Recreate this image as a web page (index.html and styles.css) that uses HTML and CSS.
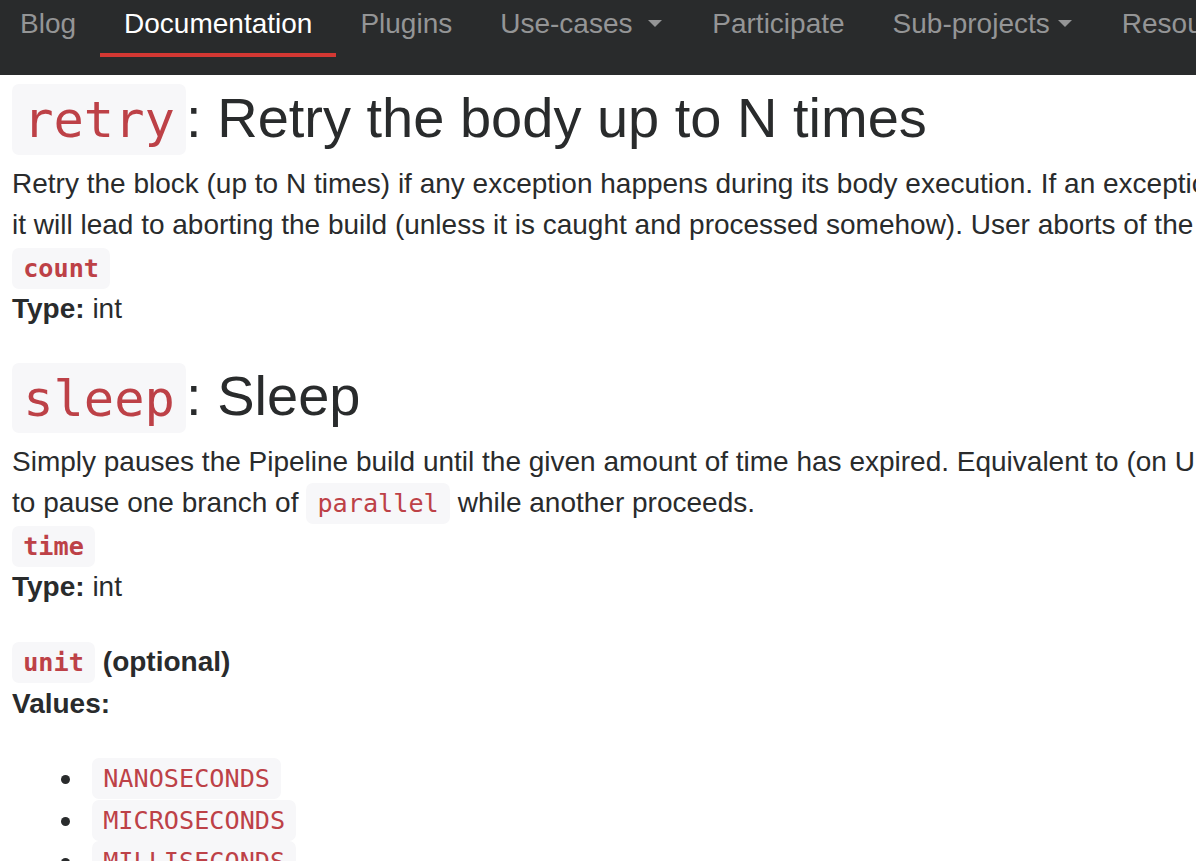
FILE: index.html
```html
<!DOCTYPE html>
<html lang="en">
<head>
<meta charset="utf-8">
<title>Pipeline Basic Steps</title>
<link rel="stylesheet" href="styles.css">
</head>
<body>
<nav class="navbar">
  <ul class="nav">
    <li><a class="nav-link" href="#">Blog</a></li>
    <li><a class="nav-link active" href="#">Documentation</a></li>
    <li><a class="nav-link" href="#">Plugins</a></li>
    <li><a class="nav-link" href="#">Use-cases <span class="caret"></span></a></li>
    <li><a class="nav-link" href="#">Participate</a></li>
    <li><a class="nav-link" href="#">Sub-projects<span class="caret"></span></a></li>
    <li><a class="nav-link" href="#">Resources<span class="caret"></span></a></li>
    <li><a class="nav-link" href="#">About<span class="caret"></span></a></li>
  </ul>
</nav>
<main class="content">
  <section class="step step-first">
    <h3 class="step-title"><code class="code">retry</code>: Retry the body up to N times</h3>
    <p class="desc">Retry the block (up to N times) if any exception happens during its body execution. If an exception happens on the final attempt then<br>it will lead to aborting the build (unless it is caught and processed somehow). User aborts of the build are not caught.</p>
    <div class="param"><code class="code pname">count</code></div>
    <div class="ptype"><b>Type:</b> int</div>
  </section>
  <section class="step">
    <h3 class="step-title"><code class="code">sleep</code>: Sleep</h3>
    <p class="desc">Simply pauses the Pipeline build until the given amount of time has expired. Equivalent to (on Unix) <code class="code">sh 'sleep …'</code>. May be used<br>to pause one branch of <code class="code">parallel</code> while another proceeds.</p>
    <div class="param"><code class="code pname">time</code></div>
    <div class="ptype"><b>Type:</b> int</div>
    <div class="param param-optional"><code class="code pname">unit</code> <b>(optional)</b></div>
    <div class="ptype"><b>Values:</b></div>
    <ul class="values">
      <li><code class="code">NANOSECONDS</code></li>
      <li><code class="code">MICROSECONDS</code></li>
      <li><code class="code">MILLISECONDS</code></li>
      <li><code class="code">SECONDS</code></li>
      <li><code class="code">MINUTES</code></li>
    </ul>
  </section>
</main>
</body>
</html>
```
FILE: styles.css
```css
html, body {
  margin: 0;
  padding: 0;
  overflow: hidden;
  background: #ffffff;
}

body {
  font-family: "Liberation Sans", Arial, Helvetica, sans-serif;
  font-size: 28px;
  line-height: 41.5px;
  color: #292b2c;
}

.navbar {
  height: 75px;
  background: #292b2c;
  overflow: hidden;
}

.nav {
  display: flex;
  margin: 0 0 0 -4px;
  padding: 0;
  list-style: none;
  white-space: nowrap;
}

.nav-link {
  display: block;
  padding: 3px 24px 8px;
  line-height: 42px;
  font-size: 28px;
  color: #949596;
  text-decoration: none;
  border-bottom: 4px solid transparent;
}

.nav-link.active {
  color: #ffffff;
  border-bottom-color: #d33833;
}

.caret {
  display: inline-block;
  width: 0;
  height: 0;
  margin-left: 8px;
  margin-right: 2px;
  border-top: 7px solid #949596;
  border-left: 7px solid transparent;
  border-right: 7px solid transparent;
  vertical-align: 6px;
}

.content {
  padding: 0 12px;
  white-space: nowrap;
}

.step {
  margin-top: 35.5px;
}

.step-first {
  margin-top: 12px;
}

.step-title {
  margin: 0 0 14px;
  font-size: 56px;
  line-height: 61.6px;
  font-weight: 400;
  color: #292b2c;
}

.code {
  font-family: "DejaVu Sans Mono", Menlo, monospace;
  font-size: 90%;
  line-height: 1;
  color: #bd4147;
  background: #f7f7f9;
  border-radius: 7px;
  padding: 6px 11.2px;
}

.step-title .code {
  padding: 5.6px 11.2px;
}

.desc {
  margin: 0;
}

.param {
  margin-top: 1px;
}

.param-optional {
  margin-top: 33.5px;
}

.pname {
  font-weight: 700;
}

.values {
  margin: 33px 0 0;
  padding: 0 0 0 80px;
  list-style: none;
}

.values li::before {
  content: "";
  display: inline-block;
  width: 9px;
  height: 9px;
  border-radius: 50%;
  background: #292b2c;
  margin-left: -31px;
  margin-right: 22px;
  vertical-align: 3px;
}
```
